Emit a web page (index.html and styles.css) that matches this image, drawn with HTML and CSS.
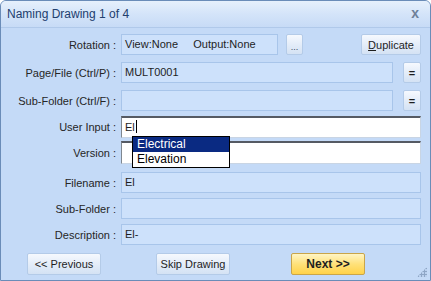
FILE: index.html
```html
<!DOCTYPE html>
<html lang="en">
<head>
    <meta charset="UTF-8">
    <title>Naming Drawing</title>
    <link rel="stylesheet" href="styles.css">
</head>
<body>
    <div class="window">
        <div class="title-bar">
            <span class="title">Naming Drawing 1 of 4</span>
            <span class="close">x</span>
        </div>
        <div class="content">
            <div class="row r1">
                <label>Rotation :</label>
                <div class="field rot">View:None&nbsp;&nbsp;&nbsp;&nbsp; Output:None</div>
                <button class="btn dots">...</button>
                <span class="spacer"></span>
                <button class="btn dup"><u>D</u>uplicate</button>
            </div>
            <div class="row r2">
                <label>Page/File (Ctrl/P) :</label>
                <div class="field">MULT0001</div>
                <button class="btn eq">=</button>
            </div>
            <div class="row r3">
                <label>Sub-Folder (Ctrl/F) :</label>
                <div class="field"></div>
                <button class="btn eq">=</button>
            </div>
            <div class="row r4">
                <label>User Input :</label>
                <div class="field input">El<span class="caret"></span></div>
                <div class="dropdown">
                    <div class="opt selected">Electrical</div>
                    <div class="opt">Elevation</div>
                </div>
            </div>
            <div class="row r5">
                <label>Version :</label>
                <div class="field input tall"></div>
            </div>
            <div class="row r6">
                <label>Filename :</label>
                <div class="field">El</div>
            </div>
            <div class="row r7">
                <label>Sub-Folder :</label>
                <div class="field"></div>
            </div>
            <div class="row r8">
                <label>Description :</label>
                <div class="field">El-</div>
            </div>
            <div class="actions">
                <button class="btn nav prev">&lt;&lt; Previous</button>
                <button class="btn nav skip">Skip Drawing</button>
                <button class="btn nav next">Next &gt;&gt;</button>
            </div>
            <div class="grip"></div>
        </div>
    </div>
</body>
</html>
```

FILE: styles.css
```css
* {
    margin: 0;
    padding: 0;
    box-sizing: border-box;
}

body {
    font-family: "Liberation Sans", Arial, sans-serif;
    font-size: 11px;
    color: #1e1e1e;
    background: #ffffff;
}

.window {
    width: 431px;
    height: 281px;
    border: 1px solid #6a8cb8;
    border-radius: 6px 6px 0 0;
    background: #c4daf7;
    overflow: hidden;
    display: flex;
    flex-direction: column;
}

.title-bar {
    height: 27px;
    flex-shrink: 0;
    display: flex;
    align-items: center;
    justify-content: space-between;
    padding: 0 11px 0 6px;
    background: linear-gradient(#e6f0fc, #d4e4f9 50%, #c7dbf6);
    border-bottom: 1px solid #b0c9ea;
}

.title {
    color: #22406e;
    font-size: 12px;
}

.close {
    color: #6d7f98;
    font-weight: bold;
    font-size: 14px;
    margin-bottom: 2px;
}

.content {
    position: relative;
    flex: 1;
    padding: 6px 9px 0 0;
}

.row {
    display: flex;
    align-items: center;
    height: 21px;
}

.row label {
    width: 116px;
    text-align: right;
    padding-right: 1px;
    margin-right: 4px;
    color: #262626;
    flex-shrink: 0;
}

.r2, .r3 { margin-top: 7px; }
.r4 { margin-top: 5px; height: 22px; }
.r5 { margin-top: 3px; height: 23px; }
.r6 { margin-top: 8px; }
.r7, .r8 { margin-top: 5px; }

.field {
    flex: 1;
    height: 100%;
    background: #cde1fb;
    border: 1px solid #a8c5ea;
    padding: 3px 3px;
    color: #1e1e1e;
    white-space: nowrap;
}

.field.rot {
    flex: 0 0 157px;
}

.field.input {
    background: #ffffff;
    border-top: 2px solid #555a63;
    border-left: 1px solid #7f8790;
    border-right: 1px solid #c9d5e4;
    border-bottom: 1px solid #c9d5e4;
    padding-top: 2px;
}

.caret {
    display: inline-block;
    width: 1px;
    height: 13px;
    background: #000;
    vertical-align: -2px;
    margin-left: 1px;
}

.btn {
    font-family: inherit;
    font-size: 11px;
    color: #1e1e1e;
    border: 1px solid #b4cbe8;
    border-radius: 2px;
    background: linear-gradient(#f6f9fe, #e4edf9 50%, #d4e2f4);
    cursor: pointer;
}

.dots {
    width: 17px;
    height: 21px;
    margin-left: 8px;
    font-size: 9px;
    color: #3a4a66;
    padding-top: 4px;
}

.spacer {
    flex: 1;
}

.dup {
    width: 60px;
    height: 21px;
}

.eq {
    width: 18px;
    height: 21px;
    margin-left: 10px;
    font-weight: bold;
}

.dropdown {
    position: absolute;
    left: 131px;
    top: 108px;
    width: 98px;
    border: 1px solid #000;
    background: #fff;
    z-index: 2;
    font-size: 12px;
}

.opt {
    height: 15px;
    line-height: 14px;
    padding-left: 4px;
    color: #000;
}

.opt.selected {
    background: #0a2a82;
    color: #fff;
}

.actions {
    display: flex;
    margin-top: 8px;
    padding-left: 26px;
}

.nav {
    width: 74px;
    height: 22px;
}

.skip {
    margin-left: 55px;
}

.next {
    margin-left: 61px;
    font-weight: bold;
    font-size: 12px;
    background: linear-gradient(#fff5c4, #ffe17a 50%, #ffd24a);
    border-color: #c9a54a;
}

.grip {
    position: absolute;
    right: 3px;
    bottom: 3px;
    width: 10px;
    height: 10px;
    background:
        radial-gradient(circle, #8ea6c6 1px, transparent 1.5px) 0 0 / 3px 3px;
    clip-path: polygon(100% 0, 100% 100%, 0 100%);
}
```
